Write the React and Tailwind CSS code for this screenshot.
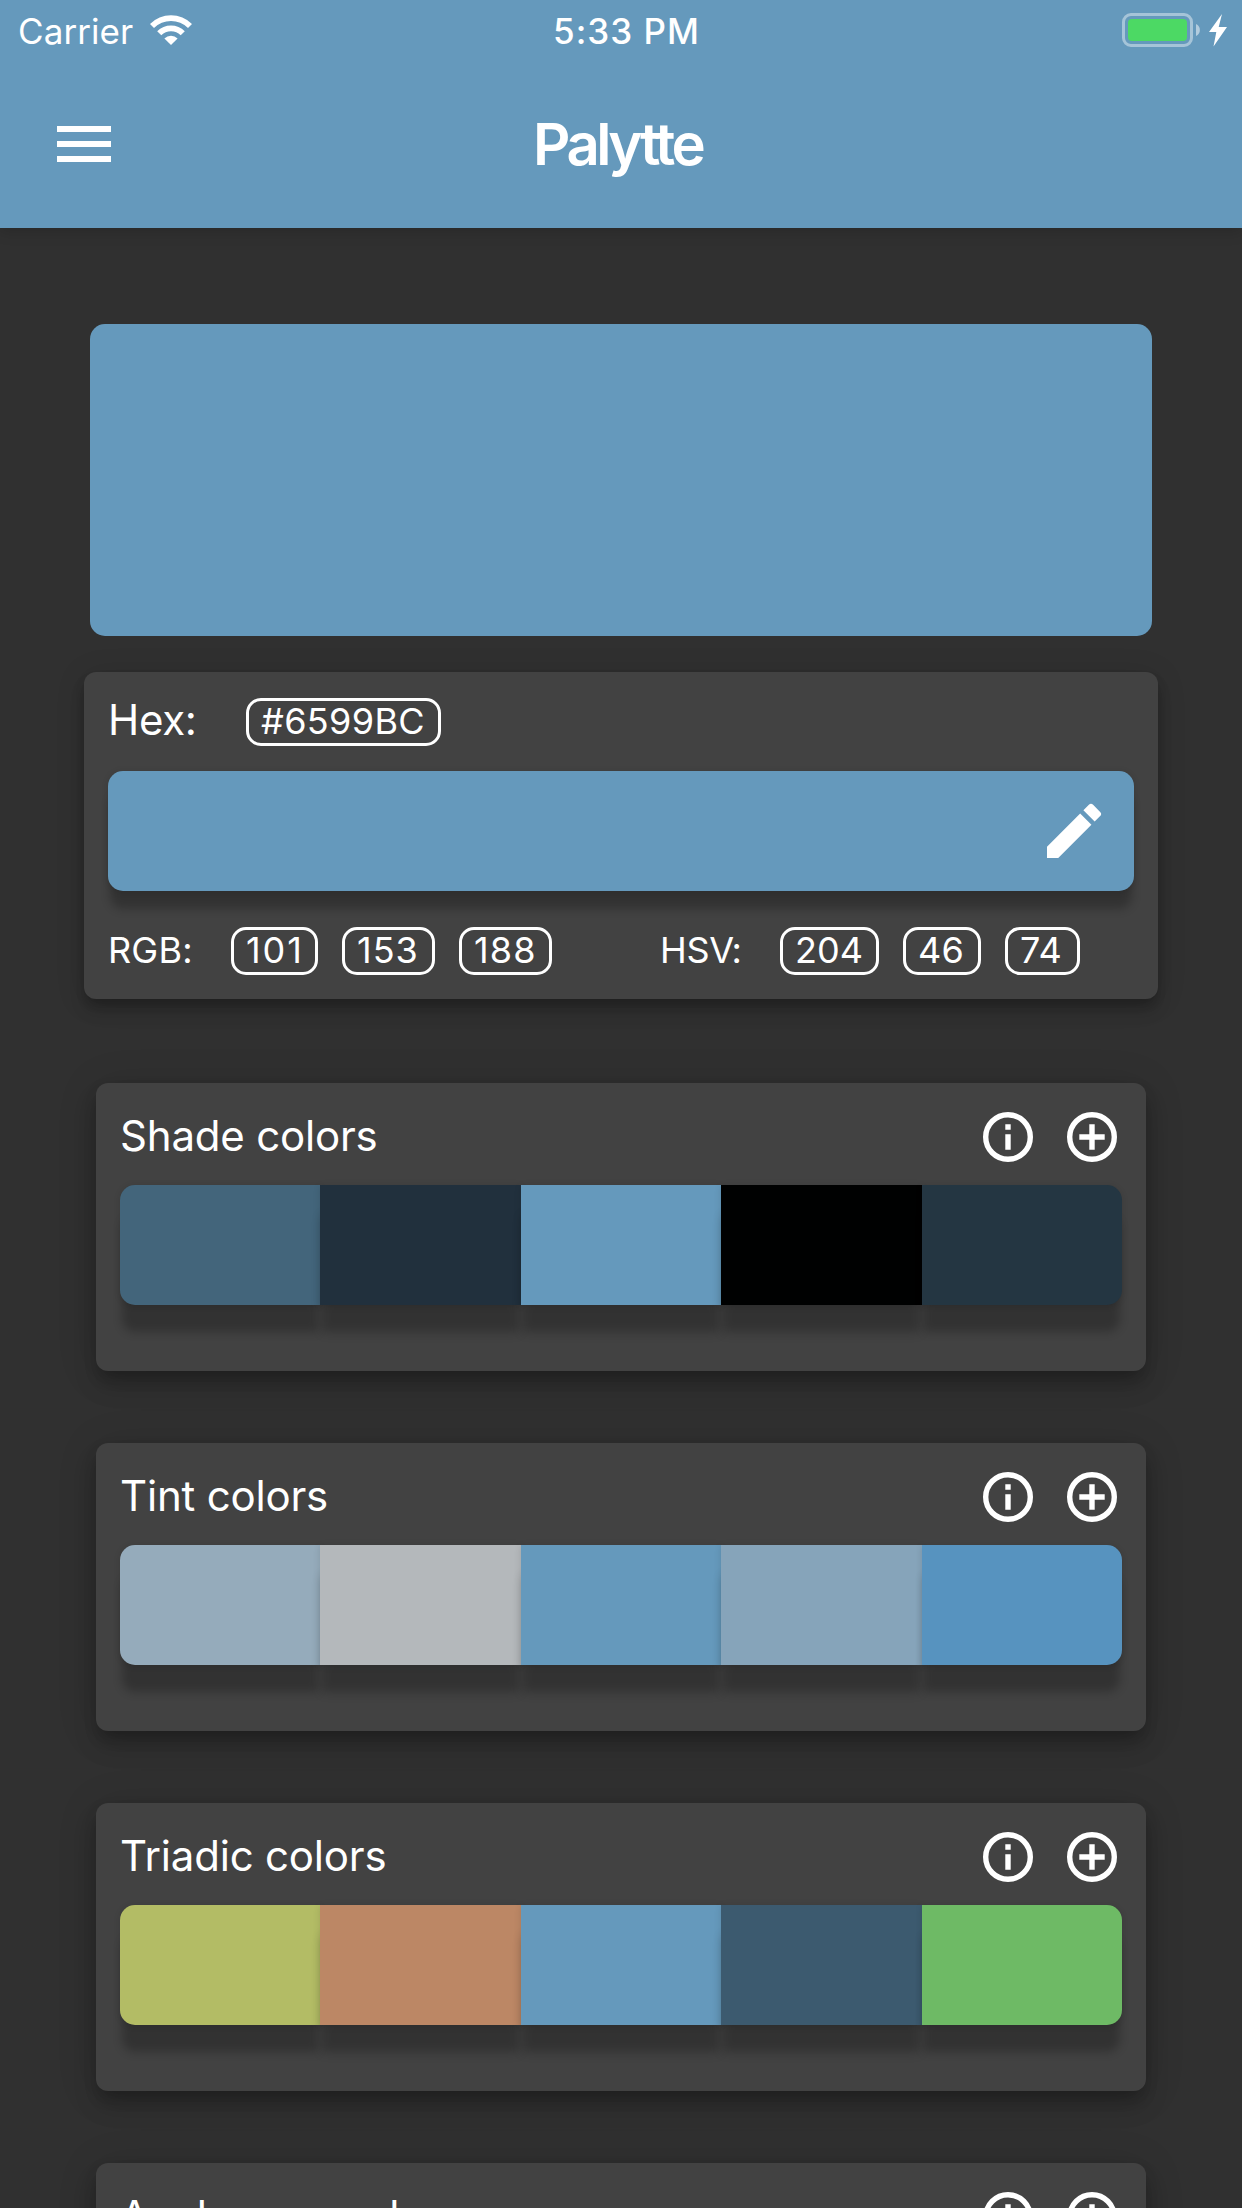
import React from 'react';
import { MdMenu, MdEdit } from 'react-icons/md';

const palettes = [
  { title: 'Shade colors', colors: ['bg-[#43657B]', 'bg-[#21303D]', 'bg-[#6599BC]', 'bg-[#000101]', 'bg-[#243642]'] },
  { title: 'Tint colors', colors: ['bg-[#95ABBB]', 'bg-[#B4B8BB]', 'bg-[#6599BC]', 'bg-[#86A4BA]', 'bg-[#5793BF]'] },
  { title: 'Triadic colors', colors: ['bg-[#B3BC65]', 'bg-[#BC8765]', 'bg-[#6599BC]', 'bg-[#3C5A6F]', 'bg-[#6EBA65]'] },
  { title: 'Analogous colors', colors: ['bg-[#65BCB3]', 'bg-[#656EBC]', 'bg-[#6599BC]', 'bg-[#43657B]', 'bg-[#65BC88]'] },
];

const rgb = [
  { value: '101', style: 'w-[87px] tracking-[1.9px]' },
  { value: '153', style: 'w-[93px] tracking-[1px]' },
  { value: '188', style: 'w-[93px] tracking-[1.2px]' },
];

const hsv = [
  { value: '204', style: 'w-[99px] tracking-[0px]' },
  { value: '46', style: 'w-[78px] tracking-[0.3px]' },
  { value: '74', style: 'w-[75px] tracking-[0.3px]' },
];

function WifiIcon() {
  return (
    <svg className="h-[30px] w-[42px]" viewBox="0 0 42 30" fill="white">
      <path d="M0 9A29.7 29.7 0 0 1 42 9L38 13A24 24 0 0 0 4 13Z" />
      <path d="M7.2 16.2A19.6 19.6 0 0 1 34.8 16.2L30.7 20.3A13.7 13.7 0 0 0 11.3 20.3Z" />
      <path d="M14.4 23.4A9.4 9.4 0 0 1 27.6 23.4L21 30Z" />
    </svg>
  );
}

function Battery() {
  return (
    <svg className="h-[34px] w-[106px]" viewBox="0 0 106 34">
      <rect x="1.5" y="1.5" width="68" height="31" rx="7.5" fill="none" stroke="white" strokeOpacity="0.42" strokeWidth="3" />
      <rect x="6" y="6" width="59" height="22" rx="4" fill="#4CD964" />
      <path d="M74 11a6.6 6.6 0 0 1 0 12z" fill="white" fillOpacity="0.5" />
      <path d="M100 1L96.7 14H105L91.5 33.5L94.3 19H87Z" fill="white" />
    </svg>
  );
}

function CircleIcon({ d, className = '' }) {
  return (
    <svg className={`size-[60px] ${className}`} viewBox="0 0 60 60" fill="none" stroke="white" strokeWidth="5.4">
      <circle cx="30" cy="30" r="22.3" />
      <path d={d} />
    </svg>
  );
}

function Chip({ value, style }) {
  return (
    <span className={`flex h-12 items-center rounded-[15px] border-[3px] border-white pb-0.5 pl-3 text-[36px] leading-none ${style}`}>
      {value}
    </span>
  );
}

function Palette({ title, colors }) {
  return (
    <section className="h-72 shrink-0 rounded-xl bg-[#424242] p-6 shadow-[0_9px_15px_-3px_rgba(0,0,0,0.2),0_15px_24px_0_rgba(0,0,0,0.14),0_3px_42px_0_rgba(0,0,0,0.12)]">
      <div className="flex h-[60px] items-center">
        <h2 className="-mt-0.5 flex-1 text-[42px] leading-none tracking-[-0.2px] whitespace-nowrap">{title}</h2>
        <CircleIcon className="mr-6" d="M30 17.3V22.7M30 27.3V42.7" />
        <CircleIcon d="M30 17.3V42.7M17.3 30H42.7" />
      </div>
      <div className="mt-[18px] flex h-[120px]">
        {colors.map((color) => (
          <div
            key={color}
            className={`flex-1 shadow-[0_29px_10px_-2px_rgba(0,0,0,0.24),0_1px_7px_0_rgba(0,0,0,0.12)] first:rounded-l-[15px] last:rounded-r-[15px] ${color}`}
          />
        ))}
      </div>
    </section>
  );
}

export default function App() {
  return (
    <div className="flex h-[2208px] w-[1242px] flex-col overflow-hidden bg-[#303030] font-['Inter',sans-serif] text-white">
      <header className="h-[228px] shrink-0 bg-[#6599BC] shadow-[0_2px_15px_rgba(0,0,0,0.2)]">
        <div className="grid h-[60px] grid-cols-[553px_1fr_auto] items-center pr-[14px] text-[35px] leading-none">
          <div className="flex items-center pl-[18px]">
            <span className="w-[132px] pt-[3px] tracking-[0.08px]">Carrier</span>
            <WifiIcon />
          </div>
          <span className="pt-[3px] font-medium tracking-[1px]">5:33 PM</span>
          <Battery />
        </div>
        <div className="grid h-[168px] grid-cols-[533px_1fr] items-center">
          <MdMenu className="ml-12 size-[72px]" />
          <h1 className="text-[58px] leading-none font-semibold tracking-[-3.5px]">Palytte</h1>
        </div>
      </header>

      <main className="flex flex-col">
        <div className="mx-[90px] mt-24 h-[312px] rounded-[15px] bg-[#6599BC]" />

        <section className="mx-[84px] mt-9 h-[327px] rounded-xl bg-[#424242] px-6 shadow-[0_6px_12px_-3px_rgba(0,0,0,0.2),0_12px_15px_0_rgba(0,0,0,0.14),0_3px_30px_0_rgba(0,0,0,0.12)]">
          <div className="flex h-[99px] items-center">
            <span className="-mt-[3px] w-[138px] text-[42px] leading-none tracking-[-0.3px]">Hex:</span>
            <Chip value="#6599BC" style="w-[195px] tracking-[0.35px]" />
          </div>
          <div className="flex h-[120px] items-center justify-end rounded-[15px] bg-[#6599BC] pr-6 shadow-[0_20px_10px_-2px_rgba(0,0,0,0.24),0_1px_7px_0_rgba(0,0,0,0.12)]">
            <MdEdit className="size-[72px]" />
          </div>
          <div className="mt-9 flex h-12 text-[36px]">
            <div className="flex w-[552px] items-center gap-6">
              <span className="w-[99px] pb-0.5 leading-none tracking-[0.2px]">RGB:</span>
              {rgb.map((chip) => <Chip key={chip.value} {...chip} />)}
            </div>
            <div className="flex items-center gap-6">
              <span className="w-24 pb-0.5 leading-none tracking-[-0.3px]">HSV:</span>
              {hsv.map((chip) => <Chip key={chip.value} {...chip} />)}
            </div>
          </div>
        </section>

        <div className="mx-24 mt-[84px] flex flex-col gap-[72px]">
          {palettes.map((palette) => <Palette key={palette.title} {...palette} />)}
        </div>
      </main>
    </div>
  );
}
